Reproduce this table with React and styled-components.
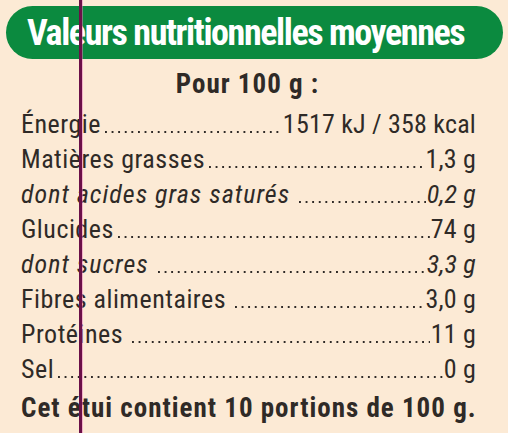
import React from "react";
import styled, { createGlobalStyle } from "styled-components";

const Global = createGlobalStyle`
  html, body { margin: 0; padding: 0; background: #fcead5; }
  body { font-family: Roboto, "Liberation Sans", sans-serif; color: #2f2a27; }
`;

const Page = styled.div`
  position: relative;
  width: 508px;
  height: 433px;
  overflow: hidden;
  background: #fcead5;
  display: flex;
  flex-direction: column;
`;

const Header = styled.div`
  margin: 6px 5px 0 6px;
  height: 53px;
  border-radius: 27px;
  background: #0b8a3f;
  display: flex;
  align-items: center;
  padding-left: 21px;
  overflow: hidden;
`;

const HeaderText = styled.h1`
  margin: 0;
  font-family: Roboto, "Liberation Sans", sans-serif;
  font-weight: 700;
  font-size: 36px;
  font-stretch: 75%;
  color: #ffffff;
  white-space: nowrap;
  letter-spacing: -1.4px;
`;

const Subtitle = styled.div`
  margin-top: 8px;
  padding-right: 13px;
  text-align: center;
  font-weight: 700;
  font-size: 27px;
  line-height: 35px;
  font-stretch: 75%;
  letter-spacing: 1px;
`;

const Table = styled.div`
  margin-top: 5px;
  padding: 0 32px 0 21px;
  display: flex;
  flex-direction: column;
`;

const Row = styled.div`
  display: flex;
  align-items: baseline;
  font-size: 26px;
  line-height: 35px;
  font-stretch: 75%;
  font-style: ${(p) => (p.$italic ? "italic" : "normal")};
  letter-spacing: ${(p) => (p.$italic ? "1px" : "0.5px")};
  white-space: nowrap;
`;

const Label = styled.span``;

const Leader = styled.span`
  flex: 1;
  align-self: baseline;
  height: 2px;
  margin: 0 1px 0 ${(p) => p.$gap || 4}px;
  background-image: linear-gradient(to right, #2f2a27 2px, transparent 2px);
  background-size: 6.6px 2px;
  background-repeat: repeat-x;
`;

const Value = styled.span`
  letter-spacing: 0.2px;
`;

const Footer = styled.div`
  margin-top: 4px;
  padding-left: 21px;
  font-weight: 700;
  font-size: 27px;
  line-height: 35px;
  font-stretch: 75%;
  letter-spacing: 1px;
  white-space: nowrap;
`;

const FoldLine = styled.div`
  position: absolute;
  top: 0;
  bottom: 0;
  left: 79px;
  width: 3px;
  background: #6b1048;
  box-shadow: 1px 0 0 rgba(230, 120, 190, 0.5);
  pointer-events: none;
`;

const rows = [
  { label: "Énergie", value: "1517 kJ / 358 kcal", gap: 4 },
  { label: "Matières grasses", value: "1,3 g", gap: 4 },
  { label: "dont acides gras saturés", value: "0,2 g", italic: true, gap: 9 },
  { label: "Glucides", value: "74 g", gap: 4 },
  { label: "dont sucres", value: "3,3 g", italic: true, gap: 9 },
  { label: "Fibres alimentaires", value: "3,0 g", gap: 9 },
  { label: "Protéines", value: "11 g", gap: 9 },
  { label: "Sel", value: "0 g", gap: 4 },
];

export default function App() {
  return (
    <>
      <Global />
      <Page>
        <Header>
          <HeaderText>Valeurs nutritionnelles moyennes</HeaderText>
        </Header>
        <Subtitle>Pour 100 g :</Subtitle>
        <Table>
          {rows.map((r) => (
            <Row key={r.label} $italic={r.italic}>
              <Label>{r.label}</Label>
              <Leader $gap={r.gap} />
              <Value>{r.value}</Value>
            </Row>
          ))}
        </Table>
        <Footer>Cet étui contient 10 portions de 100 g.</Footer>
        <FoldLine />
      </Page>
    </>
  );
}
